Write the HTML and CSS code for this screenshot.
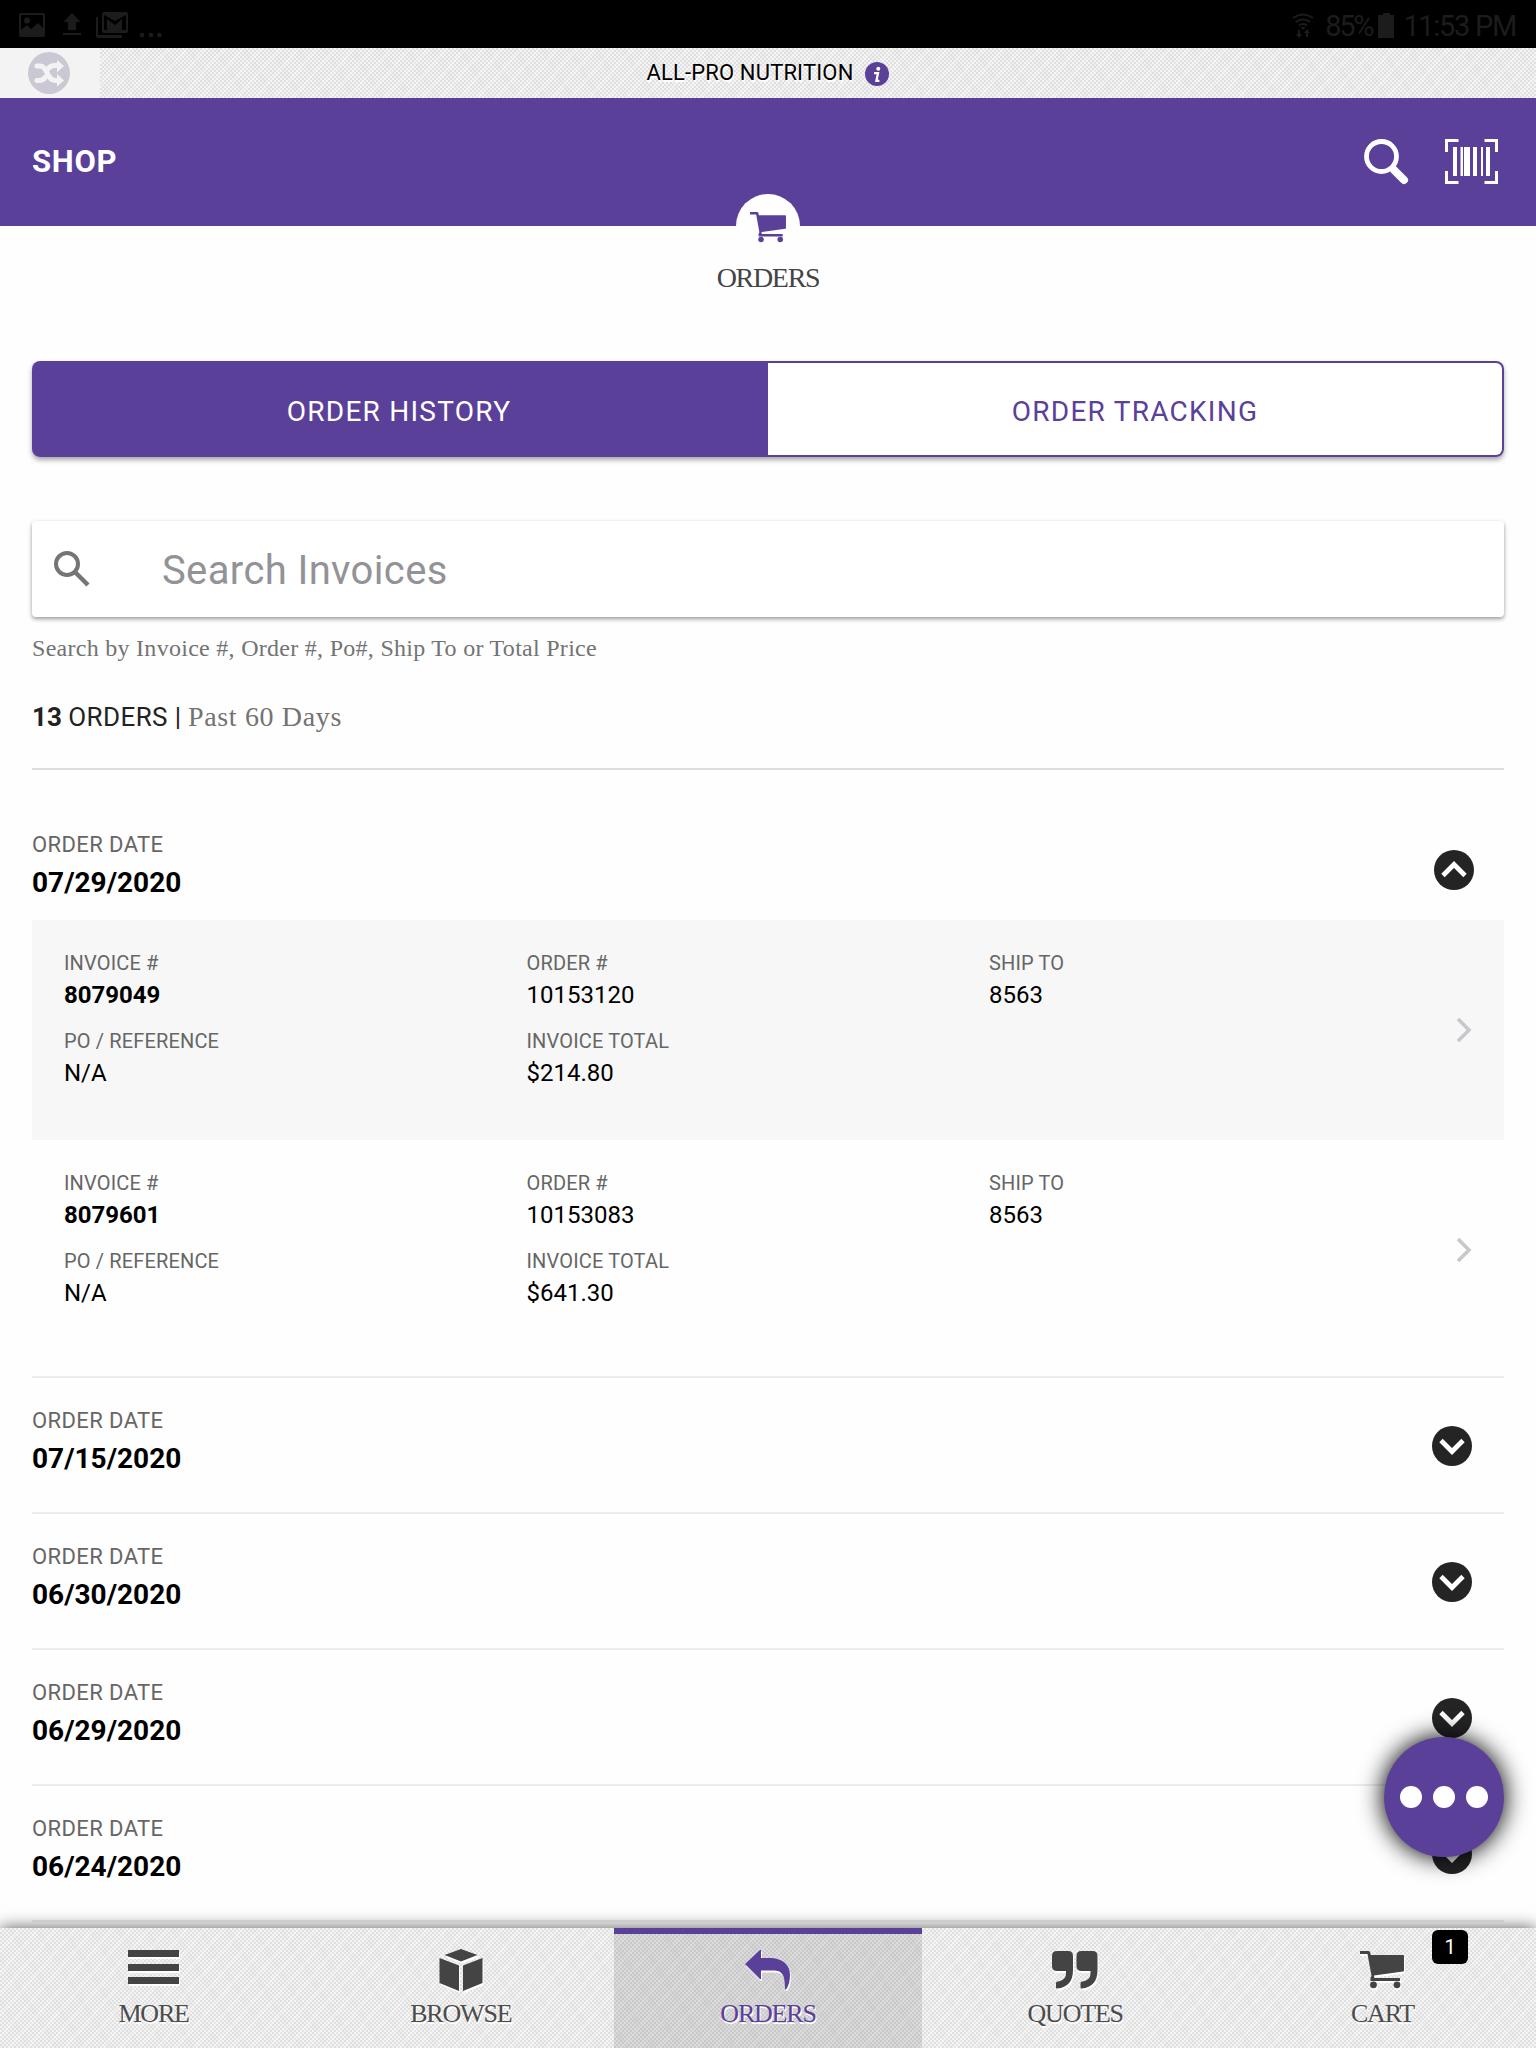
FILE: index.html
```html
<!DOCTYPE html>
<html lang="en">
<head>
    <meta charset="utf-8">
    <title>Order History</title>
    <link rel="stylesheet" href="styles.css">
</head>
<body>
    <svg class="sprite" width="0" height="0">
        <symbol id="cart" viewBox="0 0 44 38">
            <path d="M0 0h8.500q1.500 0 1.800 1.500l.5 2.500H43q1 0 1 1v14.500q0 1-1 1.100L14 24.500l.4 2.500H40v3H10.500v-3.500l1-1.500L7.500 3H0z"/>
            <circle cx="13.500" cy="33.800" r="3.400"/>
            <circle cx="37" cy="33.800" r="3.400"/>
        </symbol>
        <symbol id="down" viewBox="0 0 40 40">
            <circle cx="20" cy="20" r="20" fill="#242424"/>
            <path d="M9 14.500l11 11 11-11" fill="none" stroke="#fff" stroke-width="4.800"/>
        </symbol>
        <symbol id="next" viewBox="0 0 16 26">
            <path d="M2 2l11 11L2 24" fill="none" stroke="#c7c7cc" stroke-width="3.600"/>
        </symbol>
    </svg>

    <div class="status">
        <svg width="170" height="48" viewBox="0 0 170 48">
            <path d="M21 13h22q2 0 2 2v20q0 2-2 2H21q-2 0-2-2V15q0-2 2-2zm0 2v15l6-5 4 4 7-6 5 5V15z" fill-rule="evenodd"/>
            <circle cx="27" cy="20.500" r="3"/>
            <path d="M72 13l8.500 9H76v8h-8v-8h-4.500zM63 33h18v2H63z"/>
            <path d="M104 12h22q2 0 2 2v17q0 2-2 2h-22q-2 0-2-2V14q0-2 2-2zm0 3v15h3V19l8 6 7-6v11h4V15l-11 6z" fill-rule="evenodd"/>
            <path d="M96 17h2v18h24v3H98q-2 0-2-2z"/>
            <circle cx="142" cy="35" r="2.300"/><circle cx="151" cy="35" r="2.300"/><circle cx="159.500" cy="35" r="2.300"/>
        </svg>
        <div class="status-right">
            <svg width="22" height="26" viewBox="0 0 22 26">
                <g fill="none" stroke="#1c1c1c" stroke-width="2"><path d="M1 5q10-7 20 0M4 9q7-5 14 0M7 12.500q4-3 8 0"/></g>
                <path d="M8.500 14h5L11 17zM6 17h2v4h2l-3 4-3-4h2zM14 24h2v-4h2l-3-4-3 4h2z"/>
            </svg>
            <span class="battery-text">85%</span>
            <svg width="16" height="25" viewBox="0 0 16 25"><path d="M5 0h7v2h4v23H0V2h5z"/></svg>
            <span class="clock">11:53 PM</span>
        </div>
    </div>

    <div class="company texture">
        <div class="switch">
            <svg width="42" height="42" viewBox="0 0 42 42">
                <circle cx="21" cy="21" r="21" fill="#cbc8d4"/>
                <g fill="none" stroke="#f3f3f3" stroke-width="5">
                    <path d="M9 14h3c8 0 6 14.500 16 14.500h2M9 28.500h2q4 0 6-3M20 17q2-3.500 7-3.500h3" stroke-linecap="round"/>
                </g>
                <path d="M29 8l7 6-7 6.500zM29 22l7 6.500-7 6z" fill="#f3f3f3"/>
            </svg>
        </div>
        <span class="company-name">ALL-PRO NUTRITION</span>
        <svg class="info" width="24" height="24" viewBox="0 0 24 24">
            <circle cx="12" cy="12" r="12" fill="#5b4099"/>
            <circle cx="13.300" cy="6.700" r="2" fill="#fff"/>
            <path d="M9 11.200h4l-1.600 7.600h3" fill="none" stroke="#fff" stroke-width="2.300"/>
        </svg>
    </div>

    <header>
        <span class="shop">SHOP</span>
        <div class="header-icons">
            <svg width="45" height="46" viewBox="0 0 45 46">
                <circle cx="17.500" cy="17.500" r="15" fill="none" stroke="#fff" stroke-width="4.800"/>
                <path d="M30.500 31.500l9.500 9.500" stroke="#fff" stroke-width="8" stroke-linecap="round"/>
                <path d="M28 28l4 4" stroke="#fff" stroke-width="6"/>
            </svg>
            <svg width="53" height="45" viewBox="0 0 53 45">
                <path d="M1.500 13V1.500h12M39.500 1.500h12V13M1.500 32v11.500h12M39.500 43.500h12V32" fill="none" stroke="#fff" stroke-width="3"/>
                <path d="M8 8h4v29H8zM15.500 8h2.500v29h-2.500zM19 8h6v29h-6zM28 8h4v29h-4zM36 8h2v29h-2zM41 8h4v29h-4z" fill="#fff"/>
            </svg>
        </div>
        <div class="header-badge"><svg width="36" height="31"><use href="#cart"/></svg></div>
    </header>

    <main>
        <h1>ORDERS</h1>

        <div class="tabs">
            <div class="tab active">ORDER HISTORY</div>
            <div class="tab">ORDER TRACKING</div>
        </div>

        <div class="search">
            <svg width="36" height="36" viewBox="0 0 36 36">
                <circle cx="13" cy="13" r="11" fill="none" stroke="#757575" stroke-width="4"/>
                <path d="M21 21l13 13" stroke="#757575" stroke-width="4.500"/>
            </svg>
            <input type="text" placeholder="Search Invoices">
        </div>
        <p class="hint">Search by Invoice #, Order #, Po#, Ship To or Total Price</p>
        <p class="count"><b>13</b> <span class="count-label">ORDERS |</span> <span class="days">Past 60 Days</span></p>

        <section class="order open">
            <div class="order-head">
                <div>
                    <div class="date-label">ORDER DATE</div>
                    <div class="date">07/29/2020</div>
                </div>
                <svg class="toggle up" width="40" height="40"><use href="#down"/></svg>
            </div>
            <div class="invoice shaded">
                <div class="fields">
                    <div><label>INVOICE #</label><b>8079049</b></div>
                    <div><label>ORDER #</label><span>10153120</span></div>
                    <div><label>SHIP TO</label><span>8563</span></div>
                    <div><label>PO / REFERENCE</label><span>N/A</span></div>
                    <div><label>INVOICE TOTAL</label><span>$214.80</span></div>
                </div>
                <svg width="16" height="26"><use href="#next"/></svg>
            </div>
            <div class="invoice">
                <div class="fields">
                    <div><label>INVOICE #</label><b>8079601</b></div>
                    <div><label>ORDER #</label><span>10153083</span></div>
                    <div><label>SHIP TO</label><span>8563</span></div>
                    <div><label>PO / REFERENCE</label><span>N/A</span></div>
                    <div><label>INVOICE TOTAL</label><span>$641.30</span></div>
                </div>
                <svg width="16" height="26"><use href="#next"/></svg>
            </div>
        </section>

        <section class="order">
            <div class="order-head">
                <div>
                    <div class="date-label">ORDER DATE</div>
                    <div class="date">07/15/2020</div>
                </div>
                <svg class="toggle" width="40" height="40"><use href="#down"/></svg>
            </div>
        </section>
        <section class="order">
            <div class="order-head">
                <div>
                    <div class="date-label">ORDER DATE</div>
                    <div class="date">06/30/2020</div>
                </div>
                <svg class="toggle" width="40" height="40"><use href="#down"/></svg>
            </div>
        </section>
        <section class="order">
            <div class="order-head">
                <div>
                    <div class="date-label">ORDER DATE</div>
                    <div class="date">06/29/2020</div>
                </div>
                <svg class="toggle" width="40" height="40"><use href="#down"/></svg>
            </div>
        </section>
        <section class="order last">
            <div class="order-head">
                <div>
                    <div class="date-label">ORDER DATE</div>
                    <div class="date">06/24/2020</div>
                </div>
                <svg class="toggle" width="40" height="40"><use href="#down"/></svg>
            </div>
        </section>
    </main>

    <div class="fab"><i></i><i></i><i></i></div>

    <nav class="texture">
        <a class="more">
            <svg width="52" height="42" viewBox="0 0 52 42"><path d="M0 1h51v7H0zM0 15h51v7H0zM0 28h51v7H0z"/></svg>
            <span>MORE</span>
        </a>
        <a class="browse">
            <svg width="44" height="42" viewBox="0 0 44 42"><path d="M22 0l16.500 6L22 12.500 5.500 6zM.5 9L20 16.500V42L.5 34zM43.500 9L24 16.500V42l19.500-8z"/></svg>
            <span>BROWSE</span>
        </a>
        <a class="orders active">
            <svg width="46" height="42" viewBox="0 0 46 42"><path d="M0 15L15 1h1v8h8c15 0 21 8 21 17q0 8-3.500 14H40c0-15-3-18.500-12-18.500H16V30h-1z"/></svg>
            <span>ORDERS</span>
        </a>
        <a class="quotes">
            <svg width="46" height="42" viewBox="0 0 46 42">
                <path id="q" d="M5 2h11q5 0 5 5v14q0 17-16 18.500-1 0-1-1V34q0-1 1-1.200 9-1.500 9-8V22H5q-5 0-5-5V7q0-5 5-5z"/>
                <use href="#q" x="24.500"/>
            </svg>
            <span>QUOTES</span>
        </a>
        <a class="cart">
            <svg width="44" height="42"><use href="#cart" y="2" width="44" height="38"/></svg>
            <span>CART</span>
            <em>1</em>
        </a>
    </nav>
</body>
</html>
```

FILE: styles.css
```css
* {
    box-sizing: border-box;
}

body {
    margin: 0;
    height: 2048px;
    overflow: hidden;
    position: relative;
    background-color: #fefefe;
    color: #000;
    font-family: Roboto, sans-serif;
}

svg {
    display: block;
    flex-shrink: 0;
}

.sprite {
    position: absolute;
}

/* fine woven cloth */
.texture {
    background-color: #ebebeb;
    background-image:
        repeating-linear-gradient(131deg, rgba(255, 255, 255, 0.22) 0 3px, transparent 3px 14px),
        repeating-linear-gradient(58deg, rgba(225, 225, 225, 0.25) 0 5px, transparent 5px 23px),
        conic-gradient(#f4f4f4 25%, #dfdfdf 0 50%, #f4f4f4 0 75%, #dfdfdf 0);
    background-size: auto, auto, 4px 4px;
}

/* status bar */
.status {
    height: 48px;
    background-color: #000;
    display: flex;
    justify-content: space-between;
    color: #1c1c1c;
    fill: #1c1c1c;
    font-size: 29px;
}

.status-right {
    display: flex;
    align-items: center;
    padding: 3px 20px 0 0;
}

.battery-text {
    margin: 0 6px 0 11px;
    letter-spacing: -2.2px;
}

.clock {
    margin-left: 9px;
    letter-spacing: -1.3px;
}

/* company bar */
.company {
    height: 50px;
    display: flex;
    align-items: center;
    justify-content: center;
    position: relative;
    font-size: 22px;
    text-shadow: 1px 2px 0 #fff;
}

.company-name {
    margin-top: -2px;
    letter-spacing: 0.15px;
}

.switch {
    position: absolute;
    left: 0;
    top: 0;
    width: 100px;
    height: 50px;
    padding: 4px 0 0 28px;
    background-color: #f3f3f3;
}

.info {
    margin: 1px 0 0 12px;
}

/* header */
header {
    height: 128px;
    background-color: #5b4099;
    display: flex;
    align-items: center;
    justify-content: space-between;
    padding: 0 38px 0 32px;
    position: relative;
}

.shop {
    margin-top: -2px;
    color: #fff;
    font-size: 31px;
    font-weight: 700;
    letter-spacing: 0.7px;
}

.header-icons {
    display: flex;
    gap: 36px;
}

.header-badge {
    position: absolute;
    left: 736px;
    top: 96px;
    width: 64px;
    height: 64px;
    border-radius: 50%;
    background-color: #fefefe;
    fill: #5b4099;
    padding: 18px 14px;
}

main {
    padding: 0 32px;
}

h1,
.hint,
.days,
nav span {
    font-family: "Roboto Slab", "Liberation Serif", serif;
    font-weight: 300;
}

h1 {
    margin: 0;
    padding-top: 32px;
    height: 135px;
    font-size: 28px;
    line-height: 40px;
    letter-spacing: -1.3px;
    text-align: center;
    color: #444;
}

/* tabs */
.tabs {
    display: flex;
    height: 96px;
    border-radius: 8px;
    box-shadow: 0 3px 5px rgba(0, 0, 0, 0.35);
}

.tab {
    flex: 1;
    border: 2px solid #5b4099;
    border-left: 0;
    border-radius: 0 8px 8px 0;
    line-height: 97px;
    text-align: center;
    font-size: 28px;
    letter-spacing: 1.25px;
    color: #5b4099;
    background-color: #fff;
}

.tab.active {
    border-radius: 8px 0 0 8px;
    background-color: #5b4099;
    color: #fff;
}

/* search */
.search {
    display: flex;
    align-items: center;
    height: 96px;
    margin-top: 64px;
    padding: 0 22px;
    border-radius: 4px;
    background-color: #fff;
    box-shadow: 0 2px 4px rgba(0, 0, 0, 0.4);
}

.search input {
    flex: 1;
    margin-left: 72px;
    padding: 2px 0 0;
    border: 0;
    background: none;
    font: 40px Roboto, sans-serif;
    letter-spacing: 0.37px;
}

.search input::placeholder {
    color: #929297;
}

.hint {
    margin: 15px 0 0;
    font-size: 24px;
    line-height: 32px;
    letter-spacing: 0.28px;
    color: #737373;
}

.count {
    margin: 33px 0 0;
    height: 73px;
    border-bottom: 2px solid #ddd;
    font-size: 26px;
    line-height: 40px;
    color: #222;
}

.count-label {
    letter-spacing: 0.4px;
}

.days {
    font-size: 28px;
    letter-spacing: 0.65px;
    color: #737373;
}

/* orders */
.order {
    border-top: 2px solid #ececec;
}

.order.open {
    margin-top: 28px;
    padding-bottom: 16px;
    border-top-color: transparent;
}

.order.last {
    border-bottom: 2px solid #ececec;
}

.order-head {
    display: flex;
    justify-content: space-between;
    align-items: flex-start;
    height: 134px;
    padding: 24px 32px 0 0;
}

.open .order-head {
    height: 120px;
    padding: 26px 30px 0 0;
}

.toggle {
    margin-top: 24px;
}

.open .toggle {
    margin-top: 24px;
    transform: rotate(180deg);
}

.date-label {
    font-size: 22px;
    line-height: 38px;
    letter-spacing: 0.4px;
    color: #666;
}

.date {
    font-size: 28px;
    line-height: 38px;
    font-weight: 700;
}

.invoice {
    display: flex;
    align-items: center;
    height: 220px;
    padding: 0 32px;
}

.invoice.shaded {
    background-color: #f7f7f7;
}

.fields {
    flex: 1;
    align-self: flex-start;
    display: grid;
    grid-template-columns: 462.5px 462.5px 1fr;
    row-gap: 13px;
    padding-top: 27px;
    font-size: 24px;
    line-height: 32px;
}

.fields label {
    display: block;
    height: 32px;
    font-size: 20px;
    line-height: 33px;
    letter-spacing: 0.15px;
    color: #666;
}

.fields > div {
    height: 65px;
}

.fields b,
.fields span {
    display: block;
}

/* floating menu button */
.fab {
    position: absolute;
    left: 1384px;
    top: 1737px;
    width: 120px;
    height: 120px;
    border-radius: 50%;
    background-color: #5b4099;
    box-shadow: 0 0 24px 1px #000;
    display: flex;
    align-items: center;
    justify-content: center;
    gap: 11px;
}

.fab i {
    width: 22px;
    height: 22px;
    border-radius: 50%;
    background-color: #fff;
}

/* bottom navigation */
nav {
    position: absolute;
    left: 0;
    right: 0;
    bottom: 0;
    height: 120px;
    display: flex;
    box-shadow: 0 0 16px rgba(0, 0, 0, 0.65);
    color: #4c4c4c;
    fill: #444;
}

nav a {
    flex: 1;
    display: flex;
    flex-direction: column;
    align-items: center;
    padding-top: 21px;
    position: relative;
    text-shadow: 1px 2px 0 #fff;
}

nav svg {
    filter: drop-shadow(1px 2px 0 #fff);
}

nav span {
    margin-top: 7px;
    font-size: 26px;
    line-height: 32px;
    letter-spacing: -1.2px;
}

nav .active {
    padding-top: 15px;
    border-top: 6px solid #5b4099;
    background-color: rgba(0, 0, 0, 0.1);
    color: #5b4099;
    fill: #5b4099;
}

nav em {
    position: absolute;
    right: 68px;
    top: 2px;
    width: 36px;
    height: 34px;
    border-radius: 6px;
    background-color: #000;
    color: #fff;
    font-style: normal;
    font-size: 20px;
    line-height: 34px;
    text-align: center;
    text-shadow: none;
}
```
